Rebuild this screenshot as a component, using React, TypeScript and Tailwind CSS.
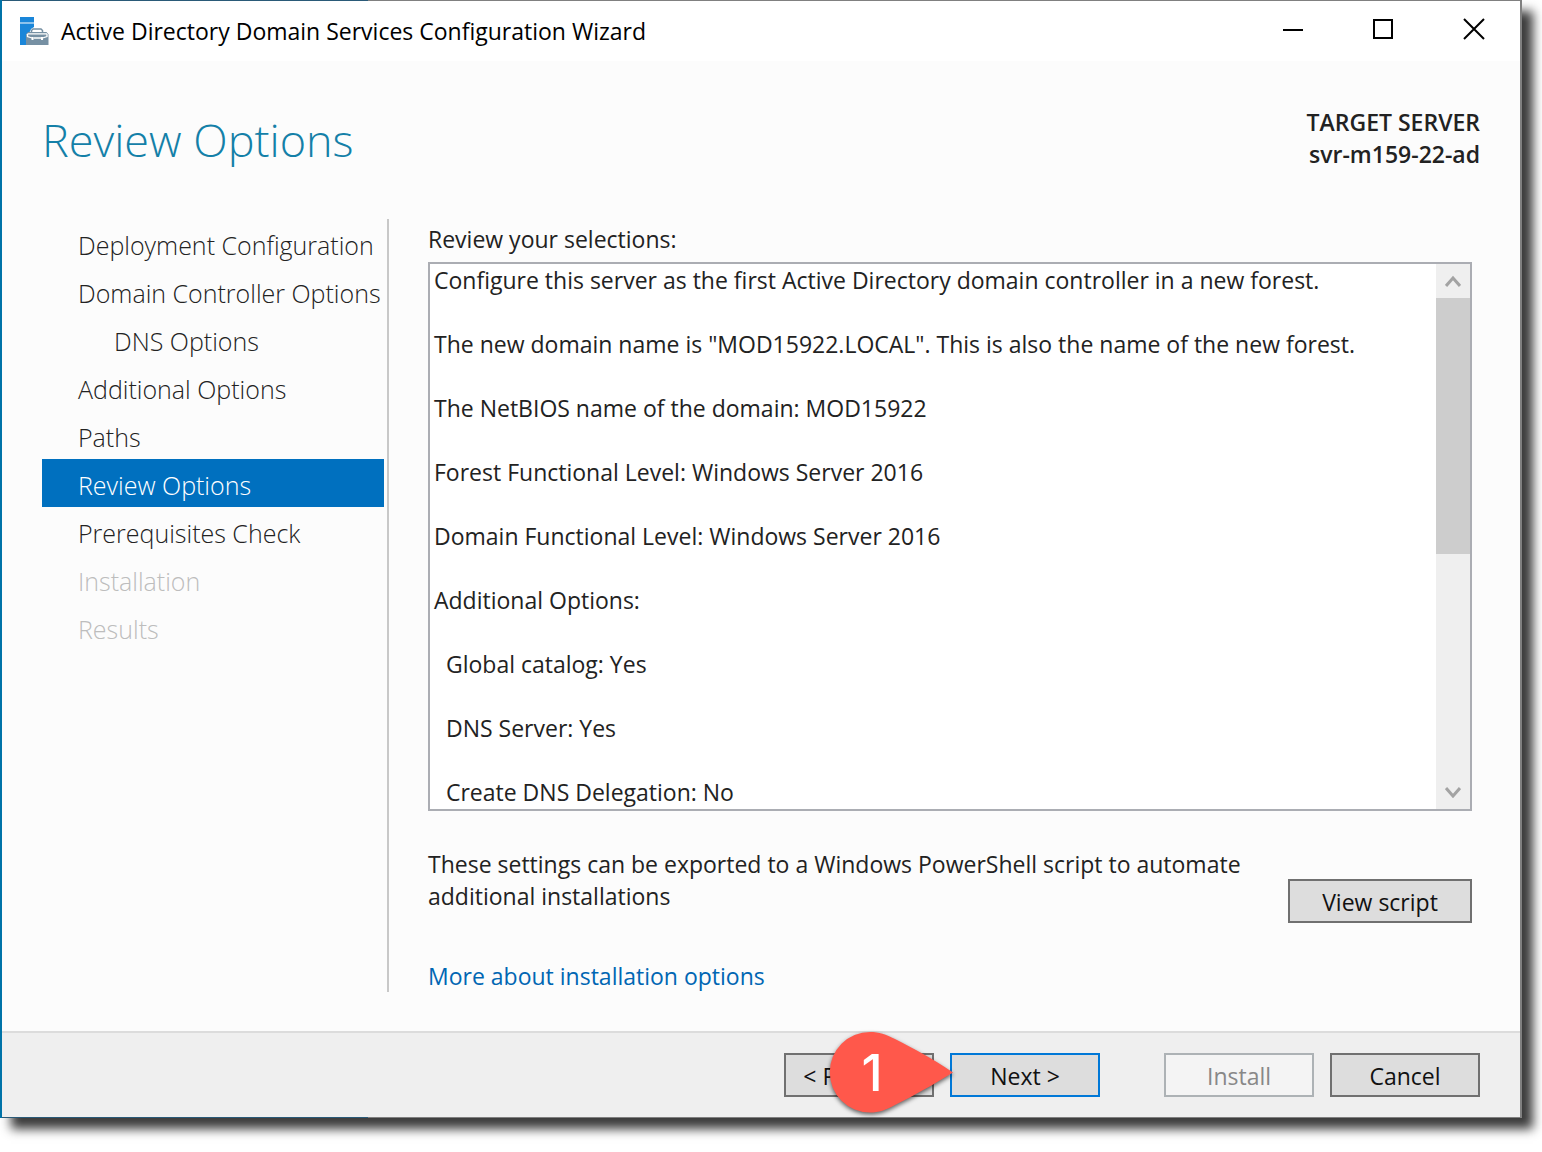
import { useRef, useState } from "react";

type Step = {
  label: string;
  nested?: boolean;
  disabled?: boolean;
};

const steps: Step[] = [
  { label: "Deployment Configuration" },
  { label: "Domain Controller Options" },
  { label: "DNS Options", nested: true },
  { label: "Additional Options" },
  { label: "Paths" },
  { label: "Review Options" },
  { label: "Prerequisites Check" },
  { label: "Installation", disabled: true },
  { label: "Results", disabled: true },
];

const selections = [
  "Configure this server as the first Active Directory domain controller in a new forest.",
  'The new domain name is "MOD15922.LOCAL". This is also the name of the new forest.',
  "The NetBIOS name of the domain: MOD15922",
  "Forest Functional Level: Windows Server 2016",
  "Domain Functional Level: Windows Server 2016",
  "Additional Options:",
  "  Global catalog: Yes",
  "  DNS Server: Yes",
  "  Create DNS Delegation: No",
].join("\n\n");

const ServerIcon = () => (
  <svg width="30" height="30" viewBox="0 0 30 30" aria-hidden="true">
    <path d="M1 1h14v5.500H1z" fill="#1a86d9" />
    <path d="M1 7.500h14v3.500l-3 2-1 2.500-4 3V29H1z" fill="#1a86d9" />
    <path d="M12.500 17v-2.500l1.500-1.500h8l1.500 1.500V17" fill="none" stroke="#7690a3" strokeWidth="1.500" />
    <path d="M7 18.500L9 16h18.500l2 2.500V29H7z" fill="#7690a3" />
    <path
      d="M8.500 17.800h19.500M8.500 18v2.500l4.500 1.500M28 18v2.500l-4.500 1.500M14.500 22h7.500"
      fill="none"
      stroke="#fff"
      strokeWidth="1.300"
    />
    <path d="M12.500 21h2v3h-2zM22 21h2v3h-2z" fill="#fff" />
  </svg>
);

const Chevron = ({ d }: { d: string }) => (
  <svg width="16" height="12" viewBox="0 0 16 12" aria-hidden="true">
    <path d={d} fill="none" stroke="#a3a3a3" strokeWidth="3" />
  </svg>
);

// Red drop that points at the next button
const Callout = ({ value }: { value: string }) => (
  <svg
    className="pointer-events-none absolute -top-[25px] left-[37px]"
    width="136"
    height="96"
    viewBox="-8 -4 136 96"
    aria-hidden="true"
  >
    <path
      d="M124 40.500C104 53 84 64 66 73C57 78 50 80.500 41 80.500A40.250 40.250 0 0 1 41 0C50 0 57 2.500 66 7C84 16 104 27 124 40.500Z"
      fill="#ff584b"
      className="drop-shadow-[0_2px_2px_rgba(0,0,0,0.6)]"
    />
    <text
      x="43"
      y="59"
      textAnchor="middle"
      fill="#fff"
      className="font-[Inter,sans-serif] text-[51px] font-medium"
    >
      {value}
    </text>
  </svg>
);

const buttonBase = "h-11 border-2 pt-[2px] text-center leading-8";
const buttonNormal = "border-[#707070] bg-[#dddddd] text-[#111]";

export default function App() {
  const [current, setCurrent] = useState("Review Options");
  const textRef = useRef<HTMLTextAreaElement>(null);

  const scroll = (amount: number) => {
    textRef.current?.scrollBy({ top: amount });
  };

  return (
    <div className="bg-white pr-5 pb-8 font-['Open_Sans',sans-serif] text-[23px] text-[#222]">
      <div className="bg-[linear-gradient(to_right,#0073a8_2px,#2a5a78_2px,#2a5a78_368px,#808080_368px)] pt-px pr-[2px] pb-px pl-[2px] shadow-[11px_11px_10px_0px_#3c3c3c]">
        <header className="flex h-[60px] items-center bg-white pl-[17px]">
          <ServerIcon />
          <span className="ml-3 grow text-black">
            Active Directory Domain Services Configuration Wizard
          </span>
          <div className="flex h-full pb-1">
            <button aria-label="Minimize" className="flex w-[90px] items-center justify-center">
              <svg width="22" height="22" viewBox="0 0 22 22">
                <path d="M1 12h20" stroke="#000" strokeWidth="2" />
              </svg>
            </button>
            <button aria-label="Maximize" className="flex w-[90px] items-center justify-center">
              <svg width="22" height="22" viewBox="0 0 22 22">
                <path d="M2 2h18v18H2z" fill="none" stroke="#000" strokeWidth="2" />
              </svg>
            </button>
            <button aria-label="Close" className="flex w-[92px] items-center justify-center">
              <svg width="22" height="22" viewBox="0 0 22 22">
                <path d="M1 1l20 20M21 1L1 21" stroke="#000" strokeWidth="2" />
              </svg>
            </button>
          </div>
        </header>

        <div className="flex items-start justify-between bg-[#fcfcfc] px-10 py-[45px]">
          <h1 className="text-[45px] leading-[68px] font-light text-[#1480a8]">{current}</h1>
          <div className="text-right leading-8 font-semibold">
            <div>TARGET SERVER</div>
            <div>svr-m159-22-ad</div>
          </div>
        </div>

        <main className="flex bg-[#fcfcfc] pr-12 pb-[39px] pl-10">
          <nav className="w-[347px] shrink-0 border-r-2 border-[#c8c8c8] pr-[3px]">
            <ul>
              {steps.map((step) => (
                <li key={step.label}>
                  <button
                    disabled={step.disabled}
                    onClick={() => setCurrent(step.label)}
                    className={`block h-12 w-full pt-1 text-left text-[25px] leading-[44px] font-light whitespace-nowrap ${
                      step.nested ? "pl-[72px]" : "pl-9"
                    } ${step.label === current ? "bg-[#0070bf] text-white" : ""} ${
                      step.disabled ? "text-[#bdbdbd]" : ""
                    }`}
                  >
                    {step.label}
                  </button>
                </li>
              ))}
            </ul>
          </nav>

          <section className="ml-[39px] min-w-0 grow">
            <label htmlFor="selections" className="block pt-1 pb-[7px] leading-8">
              Review your selections:
            </label>
            <div className="flex border-2 border-[#abadb3] bg-white">
              <textarea
                id="selections"
                ref={textRef}
                readOnly
                rows={17}
                value={selections}
                className="block min-w-0 grow resize-none overflow-hidden pb-px pl-1 leading-8 outline-none"
              />
              <div className="flex w-[34px] flex-col bg-[#efefef]">
                <button
                  aria-label="Scroll up"
                  onClick={() => scroll(-32)}
                  className="flex h-[34px] items-center justify-center"
                >
                  <Chevron d="M1 11L8 3l7 8" />
                </button>
                <div className="grow">
                  <div className="h-64 bg-[#cdcdcd]" />
                </div>
                <button
                  aria-label="Scroll down"
                  onClick={() => scroll(32)}
                  className="flex h-[34px] items-center justify-center"
                >
                  <Chevron d="M1 2l7 8 7-8" />
                </button>
              </div>
            </div>

            <div className="mt-9 flex items-start justify-between">
              <p className="max-w-[830px] pt-px leading-8">
                These settings can be exported to a Windows PowerShell script to automate additional
                installations
              </p>
              <button className={`mt-8 w-[184px] ${buttonBase} ${buttonNormal}`}>View script</button>
            </div>

            <a href="#more" className="mt-[37px] block leading-8 text-[#0066b3]">
              More about installation options
            </a>
          </section>
        </main>

        <footer className="flex justify-end gap-4 border-t-2 border-[#dcdcdc] bg-[#efefef] px-10 py-5">
          <div className="relative">
            <button className={`w-[150px] ${buttonBase} ${buttonNormal}`}>&lt; Previous</button>
            <Callout value="1" />
          </div>
          <button className={`w-[150px] border-[#0078d7] bg-[#dddddd] text-[#111] ${buttonBase}`}>
            Next &gt;
          </button>
          <button
            disabled
            className={`ml-12 w-[150px] border-[#adb2b5] bg-[#f4f4f4] text-[#888] ${buttonBase}`}
          >
            Install
          </button>
          <button className={`w-[150px] ${buttonBase} ${buttonNormal}`}>Cancel</button>
        </footer>
      </div>
    </div>
  );
}
